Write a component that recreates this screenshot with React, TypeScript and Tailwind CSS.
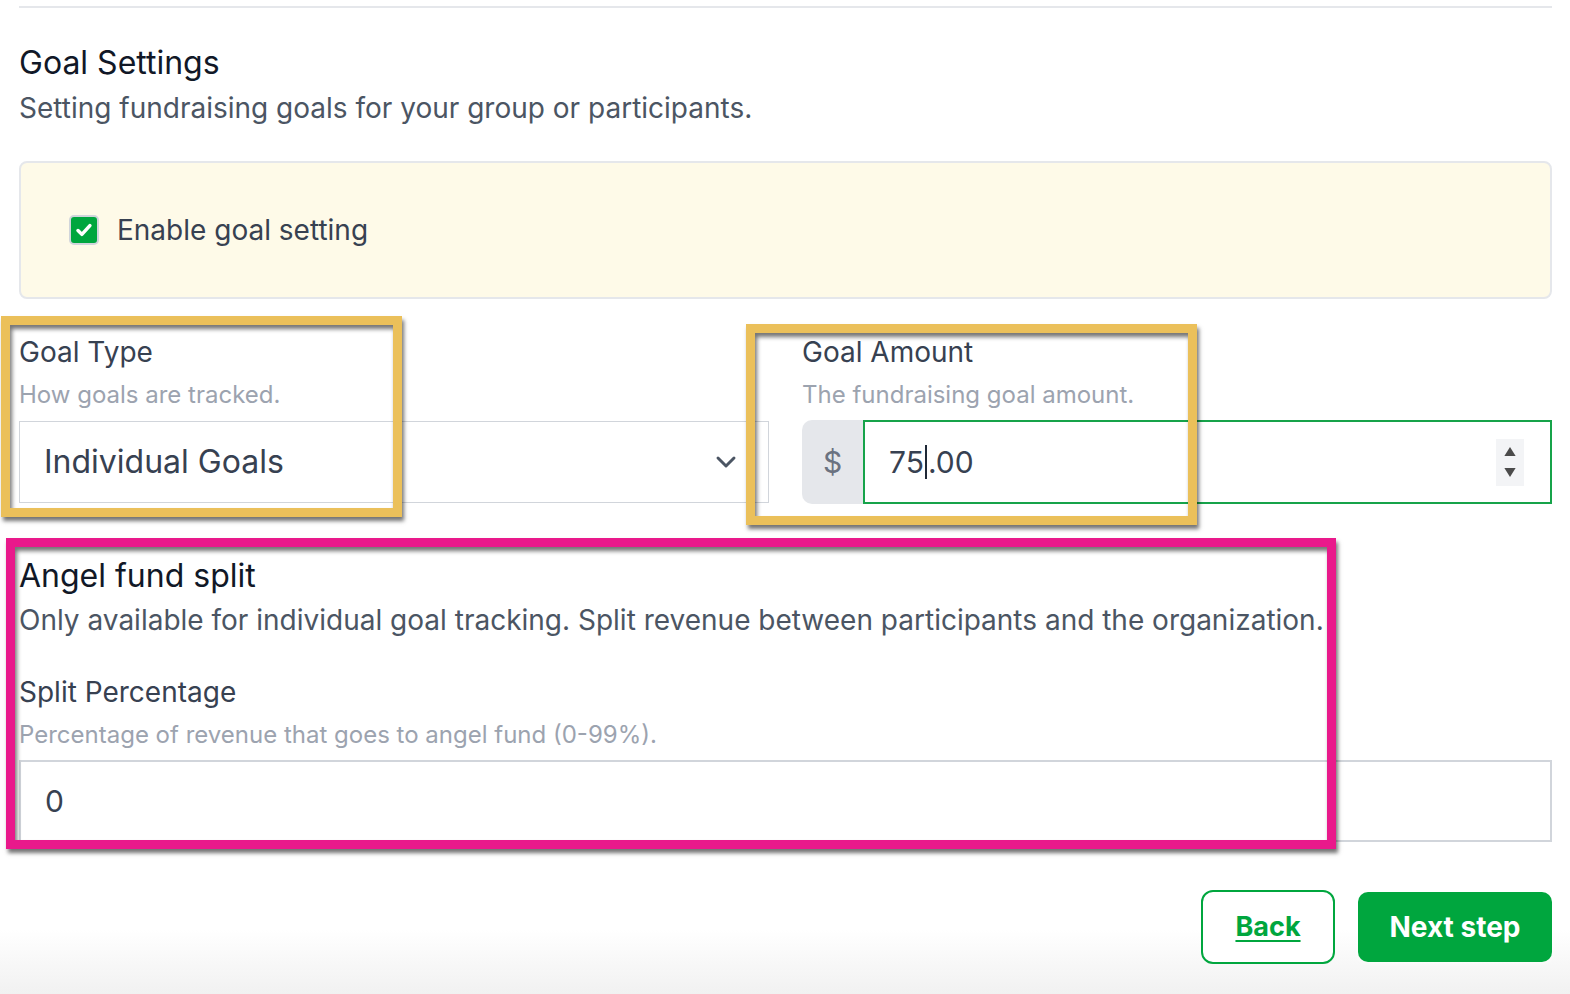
import { ChevronDown } from 'lucide-react'

function Label({ title, hint }: { title: string; hint: string }) {
    return (
        <div>
            <div className="text-[28px] leading-[32px] text-[#374151]">{title}</div>
            <div className="mt-[13px] text-[24px] leading-[28px] text-[#9ca3af]">{hint}</div>
        </div>
    )
}

function Highlight({ className }: { className: string }) {
    return (
        <div
            className={
                'pointer-events-none absolute border-[9px] shadow-[2px_4px_4px_rgba(0,0,0,0.55),inset_2px_4px_4px_rgba(0,0,0,0.55)] ' +
                className
            }
        />
    )
}

export default function App() {
    return (
        <div
            className="relative h-[994px] w-full overflow-hidden bg-[linear-gradient(to_bottom,#ffffff_0px,#ffffff_930px,#f1f1f1_994px)]"
            style={{ fontFamily: 'Inter, "Noto Sans", sans-serif' }}
        >
            <div className="pl-[19px] pr-[18px]">
                <div className="mt-[6px] h-[2px] bg-[#e5e7eb]" />

                <h2 className="mt-[37px] text-[32px] leading-[36px] text-[#111827]">Goal Settings</h2>
                <p className="mt-[9px] text-[28px] leading-[36px] text-[#4b5563]">
                    Setting fundraising goals for your group or participants.
                </p>

                {/* Enable toggle */}
                <div className="mt-[35px] flex h-[138px] items-center rounded-lg border-2 border-[#e5e7eb] bg-[#fefae8] pl-[48px]">
                    <span className="flex h-[30px] w-[30px] items-center justify-center rounded-[5px] border-2 border-[#d1d5db] bg-[#00a63e]">
                        <svg viewBox="0 0 16 16" className="h-[20px] w-[20px]" fill="none">
                            <path d="M3.2 8.4l3.1 3.1 6.4-7" stroke="white" strokeWidth="2.8" strokeLinecap="round" strokeLinejoin="round" />
                        </svg>
                    </span>
                    <span className="ml-[18px] text-[28px] text-[#374151]">Enable goal setting</span>
                </div>

                <div className="mt-[37px] grid grid-cols-2 gap-[33px]">
                    <div>
                        <Label title="Goal Type" hint="How goals are tracked." />
                        <div className="mt-[12px] flex h-[82px] items-center justify-between border border-[#d1d5db] bg-white pl-[24px] pr-[26px]">
                            <span className="text-[32px] text-[#374151]">Individual Goals</span>
                            <ChevronDown className="h-[32px] w-[32px] text-[#4b5563]" strokeWidth={2.2} />
                        </div>
                    </div>
                    <div>
                        <Label title="Goal Amount" hint="The fundraising goal amount." />
                        <div className="mt-[11px] flex h-[84px]">
                            <div className="flex w-[61px] items-center justify-center rounded-l-[10px] bg-[#e5e7eb] text-[30px] text-[#6b7280]">
                                $
                            </div>
                            <div className="flex flex-1 items-center justify-between border-2 border-[#16a34a] bg-white pl-[24px] pr-[26px]">
                                <span className="flex items-center text-[30px] text-[#374151]">
                                    75<span className="mx-[1px] inline-block h-[34px] w-[2px] bg-[#1f2937]" />.00
                                </span>
                                <div className="flex h-[47px] w-[28px] flex-col items-center justify-center gap-[12px] bg-[#f3f4f6]">
                                    <svg viewBox="0 0 10 8" className="h-[9px] w-[12px]">
                                        <path d="M5 0L10 8H0z" fill="#4b4b4b" />
                                    </svg>
                                    <svg viewBox="0 0 10 8" className="h-[9px] w-[12px]">
                                        <path d="M0 0H10L5 8z" fill="#4b4b4b" />
                                    </svg>
                                </div>
                            </div>
                        </div>
                    </div>
                </div>

                {/* Angel fund */}
                <h3 className="mt-[54px] text-[32px] leading-[36px] text-[#111827]">Angel fund split</h3>
                <p className="mt-[9px] text-[28px] leading-[34px] text-[#4b5563]">
                    Only available for individual goal tracking. Split revenue between participants and the organization.
                </p>
                <div className="mt-[39px]">
                    <Label title="Split Percentage" hint="Percentage of revenue that goes to angel fund (0-99%)." />
                    <div className="mt-[11px] flex h-[82px] items-center border-2 border-[#d1d5db] bg-white pl-[24px] text-[30px] text-[#374151]">
                        0
                    </div>
                </div>

                <div className="mt-[48px] flex items-center justify-end gap-[23px]">
                    <button className="flex h-[74px] w-[134px] items-center justify-center rounded-[12px] border-2 border-[#00a63e] bg-white text-[27px] font-bold text-[#00a63e] underline underline-offset-[4px]">
                        Back
                    </button>
                    <button className="flex h-[70px] w-[194px] items-center justify-center rounded-[10px] bg-[#00a63e] text-[28px] font-bold text-white shadow-[0_0_6px_rgba(255,255,255,0.9)]">
                        Next step
                    </button>
                </div>
            </div>

            {/* annotation boxes */}
            <Highlight className="left-[1px] top-[316px] h-[201px] w-[401px] border-[#ebc05a]" />
            <Highlight className="left-[746px] top-[324px] h-[201px] w-[451px] border-[#ebc05a]" />
            <Highlight className="left-[6px] top-[538px] h-[311px] w-[1330px] border-[#e9198b]" />
        </div>
    )
}
